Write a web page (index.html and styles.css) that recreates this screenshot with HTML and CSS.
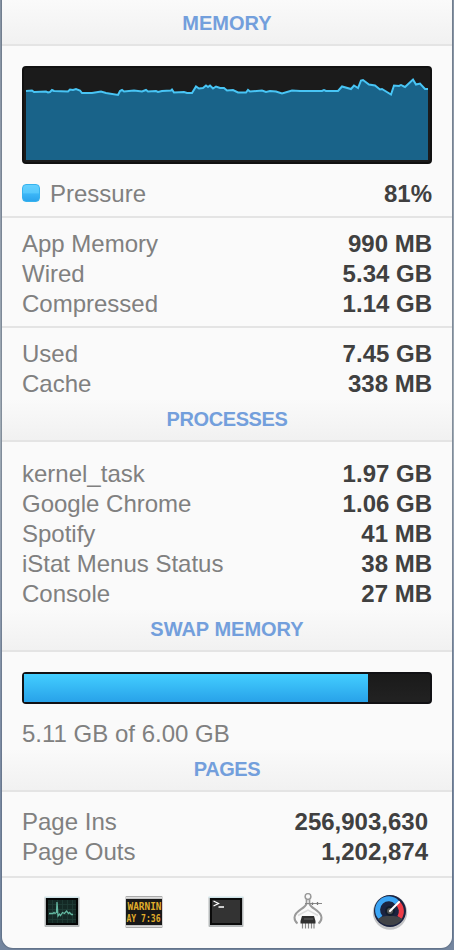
FILE: index.html
```
<!DOCTYPE html>
<html lang="en">
<head>
    <meta charset="UTF-8">
    <meta name="viewport" content="width=device-width, initial-scale=1.0">
    <title>Memory</title>
    <link rel="stylesheet" href="styles.css">
</head>
<body>
    <div class="panel">
        <h2 class="title first">MEMORY</h2>

        <div class="graph">
            <svg width="410" height="98" viewBox="22 66 410 98">
                <path class="area" d="M26 91L32 90.500L34 92L46 91.500L48 92.500L50 92L52 90L54 91L68 91.500L70 89.500L73 90L76 89L80 90.500L82 93L92 93L101 91.500L106 93L118 95L120 91L122 90L124 91.500L134 90.500L142 91.500L146 90L148 91.500L156 91L158 92L162 91L171 90.500L172 89.500L174 92.500L184 92L187 93L192 93L196 86.500L199 88.500L203 88L206 85.500L208 87L210 85.500L213 88.500L216 86.500L220 88L224 88L227 90.500L233 90L238 92.500L246 92.500L248 90L250 91.500L262 90.500L266 92L270 91L276 91.500L282 93.500L292 90.500L300 91L322 91L324 90L326 91L338 91L342 86.500L351 89L354 85.500L358 88L361 80.500L363 80L369 84.500L375 85.500L380 89.500L382 89L391 94.500L394 85.500L405 87L413 79.500L416 84.500L420 83.500L425 89L428 89V160H26Z"/>
                <polyline class="line" points="26,91 32,90.500 34,92 46,91.500 48,92.500 50,92 52,90 54,91 68,91.500 70,89.500 73,90 76,89 80,90.500 82,93 92,93 101,91.500 106,93 118,95 120,91 122,90 124,91.500 134,90.500 142,91.500 146,90 148,91.500 156,91 158,92 162,91 171,90.500 172,89.500 174,92.500 184,92 187,93 192,93 196,86.500 199,88.500 203,88 206,85.500 208,87 210,85.500 213,88.500 216,86.500 220,88 224,88 227,90.500 233,90 238,92.500 246,92.500 248,90 250,91.500 262,90.500 266,92 270,91 276,91.500 282,93.500 292,90.500 300,91 322,91 324,90 326,91 338,91 342,86.500 351,89 354,85.500 358,88 361,80.500 363,80 369,84.500 375,85.500 380,89.500 382,89 391,94.500 394,85.500 399,86 401,85 405,87 413,79.500 416,84.500 420,83.500 425,89 428,89"/>
            </svg>
        </div>

        <div class="rows pressure">
            <div class="row"><span class="key">Pressure</span><b>81%</b></div>
        </div>
        <div class="rows memory">
            <div class="row"><span>App Memory</span><b>990 MB</b></div>
            <div class="row"><span>Wired</span><b>5.34 GB</b></div>
            <div class="row"><span>Compressed</span><b>1.14 GB</b></div>
        </div>
        <div class="rows used">
            <div class="row"><span>Used</span><b>7.45 GB</b></div>
            <div class="row"><span>Cache</span><b>338 MB</b></div>
        </div>

        <h2 class="title tight">PROCESSES</h2>
        <div class="rows processes">
            <div class="row"><span>kernel_task</span><b>1.97 GB</b></div>
            <div class="row"><span>Google Chrome</span><b>1.06 GB</b></div>
            <div class="row"><span>Spotify</span><b>41 MB</b></div>
            <div class="row"><span>iStat Menus Status</span><b>38 MB</b></div>
            <div class="row"><span>Console</span><b>27 MB</b></div>
        </div>

        <h2 class="title">SWAP MEMORY</h2>
        <div class="bar"><div class="fill" style="width: 344px"></div></div>
        <div class="rows swap">
            <div class="row"><span>5.11 GB of 6.00 GB</span></div>
        </div>

        <h2 class="title tight">PAGES</h2>
        <div class="rows pages">
            <div class="row"><span>Page Ins</span><b>256,903,630</b></div>
            <div class="row"><span>Page Outs</span><b>1,202,874</b></div>
        </div>

        <div class="apps">
            <!-- Activity Monitor -->
            <svg width="36" height="32" viewBox="0 0 36 32">
                <rect x=".5" y="1" width="35" height="30" rx="1" fill="#b5b9ba"/>
                <rect x=".5" y=".5" width="35" height="1.500" fill="#cfe3e8"/>
                <rect x="2" y="2" width="32" height="27" fill="#050606"/>
                <rect x="4" y="4" width="28" height="23" fill="#142925"/>
                <path d="M8.500 4v23M13.500 4v23M18.500 4v23M23.500 4v23M28.500 4v23M4 8.500h28M4 13.500h28M4 18.500h28M4 23.500h28" stroke="#1f3d37" stroke-width=".8"/>
                <path d="M5 17.500h4l1-1 1 1 1.500-1L13 6l1 14 1.500-2 1 1.500 2-3 2 1 2-2.500 2 2.500 1-1 2 2h1.500" fill="none" stroke="#63b7a0" stroke-width="1.300"/>
            </svg>
            <!-- Console -->
            <svg width="38" height="32" viewBox="0 0 38 32">
                <rect x=".5" width="37" height="32" rx="1" fill="#aaa"/>
                <rect x="1" y="1" width="36" height="1.500" fill="#ddd"/>
                <rect x="1" y="29.500" width="36" height="1.500" fill="#ddd"/>
                <rect x="1" y="3" width="36" height="26" fill="#181818"/>
                <text class="led" x="2.500" y="14" textLength="34" lengthAdjust="spacingAndGlyphs">WARNIN</text>
                <text class="led" x="1.500" y="26" textLength="34" lengthAdjust="spacingAndGlyphs">AY 7:36</text>
            </svg>
            <!-- Terminal -->
            <svg width="37" height="32" viewBox="0 0 37 32">
                <rect x=".5" y="1" width="35" height="30" rx="1" fill="#b5b9ba"/>
                <rect x=".5" y=".5" width="35" height="1.500" fill="#cfe3e8"/>
                <rect x="2" y="2" width="32" height="27" fill="#0b0b0b"/>
                <rect x="4" y="4" width="28" height="23" fill="#333"/>
                <path d="M5.500 5l5 2.500-5 2.500M10.500 11h5.500" fill="none" stroke="#fff" stroke-width="1.300"/>
            </svg>
            <!-- System Information -->
            <svg width="37" height="38" viewBox="0 0 37 38">
                <g fill="none" stroke="#9a9a9a">
                    <circle cx="18" cy="3.500" r="2.900" stroke-width="1.500"/>
                    <path d="M16.500 6.500v5M19.500 6.500v5" stroke-width="1.700"/>
                    <path d="M16.500 10.500C15.500 16 5 17 4.500 24.500c0 3 1 4.500 3 6M19.500 10.500C20.500 16 31 17 31.500 24.500c0 3-1 4.500-3 6" stroke-width="2"/>
                    <path d="M15 10.500h17" stroke="#888" stroke-width="1"/>
                    <path d="M22.500 9.500v2.500M27.500 9v3" stroke="#777" stroke-width="1.300"/>
                    <path d="M8 22.500l10-5.500 10 5.500" stroke="#ddd" stroke-width="1.500"/>
                    <path d="M12.500 30v5.500M15.500 30v5.500M18.500 30v5.500M21.500 30v5.500M24 30v5.500" stroke="#888" stroke-width="1.200"/>
                </g>
                <path d="M12 23h12l1.500 5v2.500h-15V28z" fill="#303030"/>
                <path d="M14 26h9" stroke="#666" stroke-width="1"/>
            </svg>
            <!-- iStat Menus -->
            <svg width="36" height="36" viewBox="0 0 36 36">
                <circle cx="18" cy="18.500" r="17.200" fill="#c4c5c7"/>
                <circle cx="18" cy="17" r="16" fill="#1b2340"/>
                <path d="M8.500 23.500A11 11 0 0 1 25 8.500" fill="none" stroke="#3ba5f5" stroke-width="5"/>
                <path d="M25.500 9A11 11 0 0 1 27.500 23.500" fill="none" stroke="#ef3d48" stroke-width="5"/>
                <path d="M5.500 25C11 20.500 25 20.500 30.500 25A15.500 15.500 0 0 1 5.500 25z" fill="#414347"/>
                <circle cx="18" cy="17" r="5" fill="#111c2b"/>
                <circle cx="18" cy="17" r="3" fill="#555"/>
                <path d="M18 17l9-9" stroke="#fff" stroke-width="2.200" stroke-linecap="round"/>
            </svg>
        </div>
    </div>
</body>
</html>
```

FILE: styles.css
```
* {
    box-sizing: border-box;
}

body {
    margin: 0;
    padding: 0 2px 2px;
    height: 950px;
    background: linear-gradient(#8995a5, #a5afb9 45%, #8190a7 75%, #74869f);
    font-family: "Liberation Sans", Arial, sans-serif;
}

.panel {
    height: 948px;
    background: #fafafa;
    border-radius: 0 0 11px 11px;
    box-shadow: 0 0 1px 1px rgba(70, 85, 105, 0.4);
    overflow: hidden;
}

.title {
    height: 43px;
    margin: 0;
    padding-top: 5px;
    border-bottom: 2px solid #e4e4e4;
    background: linear-gradient(#fafafa, #f1f1f1);
    color: #739fdc;
    font-size: 20px;
    line-height: 30px;
    text-align: center;
}

.title.first {
    height: 46px;
    padding-top: 8px;
}

.title.tight {
    letter-spacing: -0.4px;
}

.graph {
    height: 98px;
    margin: 20px 20px 15px;
    border: 2px solid #111;
    border-radius: 4px;
    background: #1b1b1b;
}

.graph svg {
    display: block;
    margin: -2px;
}

.area {
    fill: #196389;
}

.line {
    fill: none;
    stroke: #48c5f5;
    stroke-width: 2;
}

.rows {
    padding: 0 20px;
}

.row {
    display: flex;
    justify-content: space-between;
    height: 30px;
    color: #808080;
    font-size: 24px;
    line-height: 30px;
}

.row b {
    color: #404040;
}

.key {
    display: flex;
    align-items: center;
    gap: 10px;
}

.key::before {
    content: "";
    width: 16px;
    height: 16px;
    margin-top: -2px;
    border: 1px solid #36b3ee;
    border-radius: 4px;
    background: linear-gradient(#65d0ff, #55c8fc 50%, #3cb6f7 55%, #2ba5ed);
}

.pressure {
    padding-bottom: 7px;
    border-bottom: 2px solid #e4e4e4;
}

.memory {
    padding-top: 11px;
    padding-bottom: 7px;
    border-bottom: 2px solid #e4e4e4;
}

.used {
    padding-top: 11px;
}

.processes {
    padding-top: 17px;
}

.bar {
    height: 32px;
    margin: 20px 20px 15px;
    border: 2px solid #111114;
    border-radius: 4px;
    background: linear-gradient(#1a1a1a, #222);
}

.fill {
    height: 28px;
    background: linear-gradient(#43ceff, #28a2e9);
}

.pages {
    padding: 15px 24px 9px 20px;
    border-bottom: 2px solid #e4e4e4;
}

.apps {
    display: flex;
    gap: 45px;
    align-items: center;
    height: 68px;
    padding-left: 42px;
}

.led {
    fill: #e0ad2b;
    font-family: "DejaVu Sans Mono", monospace;
    font-size: 10px;
    font-weight: bold;
}
```
